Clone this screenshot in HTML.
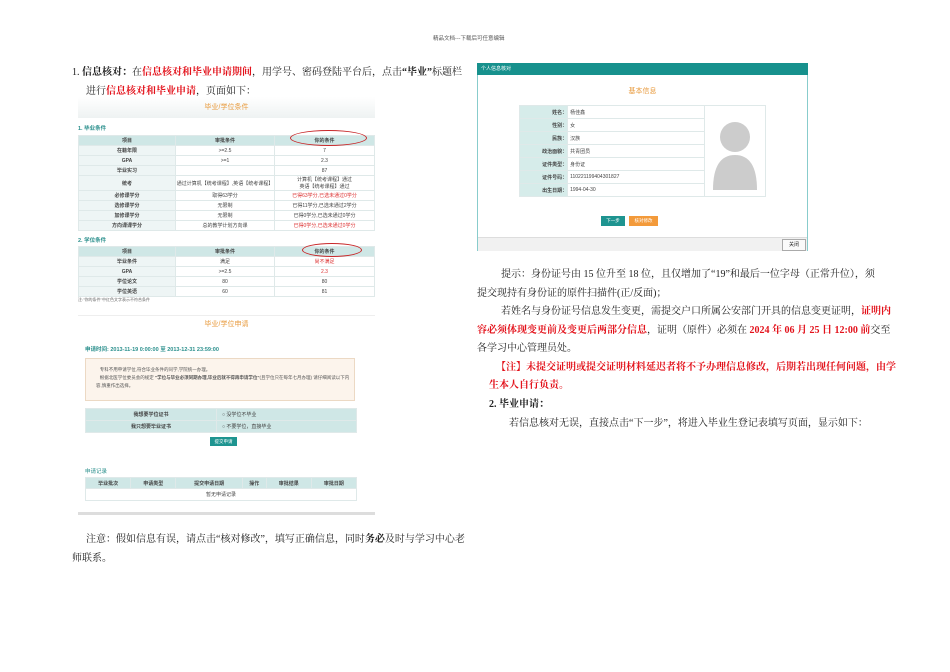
<!DOCTYPE html><html><head><meta charset="utf-8"><style>
body{margin:0;width:950px;height:672px;background:#fff;position:relative;font-family:"Liberation Serif","Noto Serif CJK SC",serif;color:#222;overflow:hidden}
.a{position:absolute;white-space:nowrap}
.t{font-size:10px}
.r{color:#e3121b;font-weight:bold}
.s{font-family:"Liberation Sans","Noto Sans CJK SC",sans-serif}
table{border-collapse:collapse;position:absolute;font-family:"Liberation Sans","Noto Sans CJK SC",sans-serif;font-size:5px;color:#444}
td{border:1px solid #dfe9e9;text-align:center;padding:0;overflow:hidden}
.h td{background:#cfe7e6;font-weight:bold}
.l{background:#eef5f5;font-weight:bold}
.red{color:#d33}
</style></head><body>
<div class="a s" style="left:433px;top:34px;font-size:5.5px;color:#555">精品文档---下载后可任意编辑</div>

<div class="a t" style="left:72px;top:63px">1. <b>信息核对：</b>在<span class="r">信息核对和毕业申请期间</span>，用学号、密码登陆平台后，点击<b>“毕业”</b>标题栏</div>
<div class="a t" style="left:86px;top:82px">进行<span class="r">信息核对和毕业申请</span>，页面如下：</div>

<!-- screenshot 1 -->
<div class="a" style="left:78px;top:97px;width:297px;height:21px;background:linear-gradient(#fff,#eef2f2)"></div>
<div class="a s" style="left:78px;top:102px;width:297px;text-align:center;font-size:7px;color:#e89a3c">毕业/学位条件</div>
<div class="a s" style="left:78px;top:124px;font-size:5.5px;color:#2a8f8c;font-weight:bold">1. 毕业条件</div>
<table style="left:78px;top:135px;width:297px">
<tr class="h" style="height:10px"><td style="width:96px">项目</td><td style="width:98px">审批条件</td><td>你的条件</td></tr>
<tr style="height:10px"><td class="l">在籍年限</td><td>&gt;=2.5</td><td>7</td></tr>
<tr style="height:10px"><td class="l">GPA</td><td>&gt;=1</td><td>2.3</td></tr>
<tr style="height:10px"><td class="l">毕业实习</td><td></td><td>87</td></tr>
<tr style="height:12px"><td class="l">统考</td><td>通过计算机【统考课程】,英语【统考课程】</td><td>计算机【统考课程】通过<br>英语【统考课程】通过</td></tr>
<tr style="height:10px"><td class="l">必修课学分</td><td>取得63学分</td><td class="red">已得63学分,已选未通过0学分</td></tr>
<tr style="height:10px"><td class="l">选修课学分</td><td>无限制</td><td>已得11学分,已选未通过2学分</td></tr>
<tr style="height:10px"><td class="l">加修课学分</td><td>无限制</td><td>已得0学分,已选未通过0学分</td></tr>
<tr style="height:10px"><td class="l">方向课课学分</td><td>总的教学计划方向课</td><td class="red">已得0学分,已选未通过0学分</td></tr>
</table>
<div class="a" style="left:290px;top:130px;width:75px;height:14px;border:1.5px solid #c8282a;border-radius:50%"></div>
<div class="a s" style="left:78px;top:236px;font-size:5.5px;color:#2a8f8c;font-weight:bold">2. 学位条件</div>
<table style="left:78px;top:246px;width:297px">
<tr class="h" style="height:10px"><td style="width:96px">项目</td><td style="width:98px">审批条件</td><td>你的条件</td></tr>
<tr style="height:10px"><td class="l">毕业条件</td><td>满足</td><td class="red">尚不满足</td></tr>
<tr style="height:10px"><td class="l">GPA</td><td>&gt;=2.5</td><td class="red">2.3</td></tr>
<tr style="height:10px"><td class="l">学位论文</td><td>80</td><td>80</td></tr>
<tr style="height:10px"><td class="l">学位英语</td><td>60</td><td>81</td></tr>
</table>
<div class="a" style="left:302px;top:243px;width:58px;height:12px;border:1.5px solid #c8282a;border-radius:50%"></div>
<div class="a s" style="left:78px;top:297px;font-size:4px;color:#666">注:"你的条件"中红色文字表示不符合条件</div>

<!-- screenshot 2 -->
<div class="a" style="left:78px;top:315px;width:297px;height:1px;background:#eee"></div>
<div class="a s" style="left:78px;top:319px;width:297px;text-align:center;font-size:7px;color:#e89a3c">毕业/学位申请</div>
<div class="a s" style="left:85px;top:345px;font-size:5.5px;color:#2a8f8c;font-weight:bold">申请时间: 2013-11-19 0:00:00 至 2013-12-31 23:59:00</div>
<div class="a s" style="left:85px;top:358px;width:270px;height:43px;background:#fcf4ec;border:1px solid #ecd9c4;font-size:4.5px;color:#555;line-height:8px;padding:7px 0 0 10px;box-sizing:border-box;white-space:normal">&nbsp;&nbsp;&nbsp;专科不用申请学位,符合毕业条件的同学,学院统一办理。<br>&nbsp;&nbsp;&nbsp;根据北医学位委员会的规定 <b>"学位与毕业必须同期办理,毕业后就不得再申请学位"</b>(且学位只在每年七月办理) 请仔细阅读以下内容,慎重作出选择。</div>
<table style="left:85px;top:408px;width:272px">
<tr style="height:12px;background:#cfe7e6"><td style="width:130px;font-weight:bold">我想要学位证书</td><td style="text-align:left;padding-left:5px">○ 没学位不毕业</td></tr>
<tr style="height:12px;background:#cfe7e6"><td style="font-weight:bold">我只想要毕业证书</td><td style="text-align:left;padding-left:5px">○ 不要学位，直接毕业</td></tr>
</table>
<div class="a s" style="left:210px;top:437px;width:27px;height:9px;background:#1e9490;color:#fff;font-size:4.5px;text-align:center;line-height:9px">提交申请</div>
<div class="a s" style="left:85px;top:467px;font-size:5.5px;color:#2a8f8c">申请记录</div>
<table style="left:85px;top:477px;width:272px">
<tr class="h" style="height:11px"><td>毕业批次</td><td>申请类型</td><td>提交申请日期</td><td>操作</td><td>审批结果</td><td>审批日期</td></tr>
<tr style="height:12px"><td colspan="6">暂无申请记录</td></tr>
</table>
<div class="a" style="left:78px;top:512px;width:297px;height:3px;background:#ddd"></div>

<div class="a t" style="left:86px;top:530px">注意：假如信息有误，请点击“核对修改”，填写正确信息，同时<b>务必</b>及时与学习中心老</div>
<div class="a t" style="left:72px;top:549px">师联系。</div>

<!-- dialog -->
<div class="a" style="left:477px;top:63px;width:331px;height:188px;border:1px solid #8cc;box-sizing:border-box;background:#fff"></div>
<div class="a s" style="left:477px;top:63px;width:331px;height:12px;background:#17918d;color:#fff;font-size:5px;line-height:12px;padding-left:4px;box-sizing:border-box">个人信息核对</div>
<div class="a s" style="left:477px;top:86px;width:331px;text-align:center;font-size:7px;color:#e89a3c">基本信息</div>
<table style="left:519px;top:105px;width:247px;font-size:5px">
<tr style="height:13px"><td class="l" style="width:48px;text-align:right;background:#d6ecea">姓名：</td><td style="text-align:left;padding-left:2px;width:136px">杨佳鑫</td><td rowspan="7" style="background:#fff;position:relative"><svg width="60" height="80" viewBox="0 0 60 80"><circle cx="30" cy="27" r="15" fill="#ccc"/><path d="M8 80 Q8 45 30 45 Q52 45 52 80Z" fill="#ccc"/></svg></td></tr>
<tr style="height:13px"><td class="l" style="text-align:right;background:#d6ecea">性别：</td><td style="text-align:left;padding-left:2px">女</td></tr>
<tr style="height:13px"><td class="l" style="text-align:right;background:#d6ecea">民族：</td><td style="text-align:left;padding-left:2px">汉族</td></tr>
<tr style="height:13px"><td class="l" style="text-align:right;background:#d6ecea">政治面貌：</td><td style="text-align:left;padding-left:2px">共青团员</td></tr>
<tr style="height:13px"><td class="l" style="text-align:right;background:#d6ecea">证件类型：</td><td style="text-align:left;padding-left:2px">身份证</td></tr>
<tr style="height:13px"><td class="l" style="text-align:right;background:#d6ecea">证件号码：</td><td style="text-align:left;padding-left:2px">110221199404301827</td></tr>
<tr style="height:13px"><td class="l" style="text-align:right;background:#d6ecea">出生日期：</td><td style="text-align:left;padding-left:2px">1994-04-30</td></tr>
</table>
<div class="a s" style="left:601px;top:216px;width:24px;height:10px;background:#1e9490;color:#fff;font-size:4.5px;text-align:center;line-height:10px">下一步</div>
<div class="a s" style="left:629px;top:216px;width:29px;height:10px;background:#f39a3a;color:#fff;font-size:4.5px;text-align:center;line-height:10px">核对修改</div>
<div class="a" style="left:478px;top:237px;width:329px;height:13px;background:#f1f1f1;border-top:1px solid #ddd"></div>
<div class="a s" style="left:782px;top:239px;width:22px;height:10px;background:#fafafa;border:1px solid #aaa;font-size:5px;text-align:center;line-height:10px">关闭</div>

<div class="a t" style="left:501px;top:265px">提示：身份证号由 15 位升至 18 位，且仅增加了“19”和最后一位字母（正常升位），须</div>
<div class="a t" style="left:477px;top:284px">提交现持有身份证的原件扫描件(正/反面)；</div>
<div class="a t" style="left:501px;top:302px">若姓名与身份证号信息发生变更，需提交户口所属公安部门开具的信息变更证明，<span class="r">证明内</span></div>
<div class="a t" style="left:477px;top:321px"><span class="r">容必须体现变更前及变更后两部分信息</span>，证明（原件）必须在 <span class="r">2024 年 06 月 25 日 12:00 前</span>交至</div>
<div class="a t" style="left:477px;top:339px">各学习中心管理员处。</div>
<div class="a t r" style="left:496px;top:358px">【注】未提交证明或提交证明材料延迟者将不予办理信息修改，后期若出现任何问题，由学</div>
<div class="a t r" style="left:489px;top:376px">生本人自行负责。</div>
<div class="a t" style="left:489px;top:395px"><b>2. 毕业申请：</b></div>
<div class="a t" style="left:509px;top:414px">若信息核对无误，直接点击“下一步”，将进入毕业生登记表填写页面，显示如下：</div>
</body></html>
